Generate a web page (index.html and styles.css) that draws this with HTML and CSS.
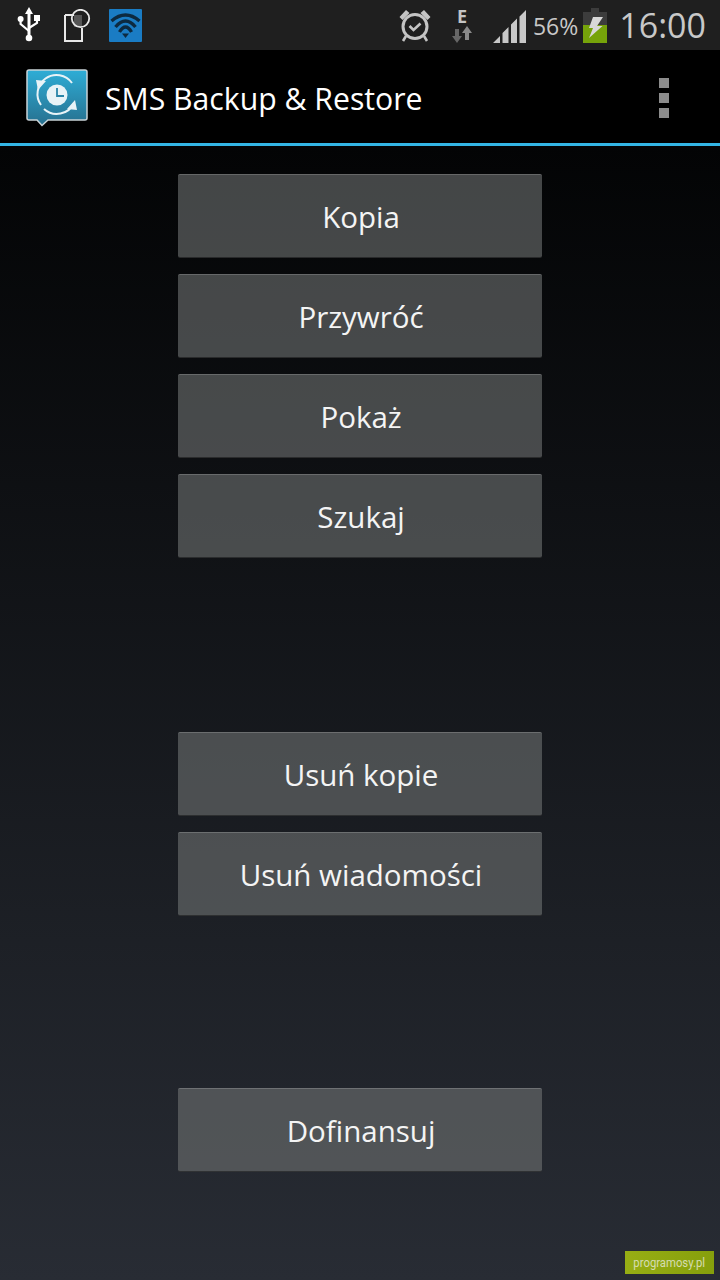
FILE: index.html
```html
<!DOCTYPE html>
<html lang="pl">

<head>
    <meta charset="UTF-8" />
    <meta name="viewport" content="width=device-width, initial-scale=1.0" />
    <title>SMS Backup &amp; Restore</title>
    <link rel="stylesheet" href="styles.css">
</head>

<body>
    <div class="status-bar">
        <div class="status-left">
            <!-- usb -->
            <svg class="icon-usb" width="24" height="36" viewBox="0 0 24 36">
                <g fill="#fff">
                    <path d="M12 0 L16 7 H13.500 V32 H10.500 V7 H8 Z" />
                    <circle cx="12" cy="31" r="3.300" />
                    <circle cx="3.600" cy="12" r="3" />
                    <rect x="17" y="8" width="6" height="6" />
                </g>
                <path d="M3.600 12 V17 L12 24 M20 13 V16 L12 21" fill="none" stroke="#fff" stroke-width="2.200" />
            </svg>
            <!-- sim -->
            <svg class="icon-sim" width="27" height="33" viewBox="0 0 27 33">
                <path d="M1 6 H10 M1 6 V32 H18 V19" fill="none" stroke="#e8e8e8" stroke-width="2" />
                <rect x="10" y="6" width="8" height="12" fill="#555" />
                <circle cx="16.500" cy="9.500" r="8.700" fill="none" stroke="#e8e8e8" stroke-width="1.800" />
            </svg>
            <!-- wifi -->
            <svg class="icon-wifi" width="33" height="33" viewBox="0 0 33 33">
                <rect width="33" height="33" rx="1" fill="#1a7cc4" />
                <g fill="none" stroke="#0d2a40" stroke-width="3.400">
                    <path d="M2.500 12 Q16.500 0 30.500 12" />
                    <path d="M6.500 18 Q16.500 6 26.500 18" />
                    <path d="M10.500 23 Q16.500 13 22.500 23" />
                </g>
                <path d="M13 24.500 H20 L16.500 29 Z" fill="#0d2a40" />
            </svg>
        </div>
        <div class="status-right">
            <!-- alarm -->
            <svg class="icon-alarm" width="34" height="34" viewBox="0 0 34 34">
                <circle cx="17" cy="18.500" r="12" fill="none" stroke="#c4c4c4" stroke-width="3" />
                <path d="M11.500 18 L15.500 22 L22.500 15.500" fill="none" stroke="#c4c4c4" stroke-width="2.600" />
                <path d="M1.500 9 L8 2 L11.500 5 L4.500 12 Z M32.500 9 L26 2 L22.500 5 L29.500 12 Z" fill="#c4c4c4" />
                <path d="M8 28 L5 33 M26 28 L29 33" stroke="#c4c4c4" stroke-width="2.600" />
            </svg>
            <div class="net-type">
                <span class="net-letter">E</span>
                <svg width="20" height="17" viewBox="0 0 20 17">
                    <path d="M5 17 L0 10 H3 V3 H7 V10 H10 Z" fill="#666" />
                    <path d="M15 0 L20 7 H17 V14 H13 V7 H10 Z" fill="#8a8a8a" />
                </svg>
            </div>
            <svg class="icon-signal" width="33" height="33" viewBox="0 0 33 33">
                <path d="M0 33 L7 26 V33 Z M9.500 33 V23 L15.500 17 V33 Z M18 33 V14.500 L24 8.500 V33 Z M26.500 33 V6.500 L33 0 V33 Z" fill="#c8c8c8" />
            </svg>
            <span class="battery-pct">56%</span>
            <svg class="icon-battery" width="24" height="35" viewBox="0 0 24 35">
                <rect x="8" y="0" width="8" height="4" fill="#3c3c3c" />
                <rect x="0" y="4" width="24" height="13" fill="#3c3c3c" />
                <rect x="0" y="17" width="24" height="18" fill="#76a30a" />
                <path d="M10 9 H20 L14 18 H19.500 L6 30 L10 20 H6 Z" fill="#d8d8d8" />
            </svg>
            <span class="clock">16:00</span>
        </div>
    </div>

    <div class="action-bar">
        <svg class="app-icon" width="62" height="58" viewBox="0 0 62 58">
            <defs>
                <linearGradient id="appGrad" x1="0" y1="0" x2="0" y2="1">
                    <stop offset="0" stop-color="#2eadd6" />
                    <stop offset="1" stop-color="#27708f" />
                </linearGradient>
            </defs>
            <path d="M3 1 H59 Q61 1 61 3 V49 Q61 51 59 51 H22 L16 56.500 L11 51 H3 Q1 51 1 49 V3 Q1 1 3 1 Z" fill="url(#appGrad)" stroke="#c9d3d8" stroke-width="1.500" />
            <g fill="none" stroke="#e8f3f7" stroke-width="2">
                <path d="M15 36 A19 19 0 0 1 46 14" />
                <path d="M48 34 A19 19 0 0 1 18 40" />
            </g>
            <circle cx="31" cy="26" r="10.500" fill="#e8f3f7" />
            <path d="M31 19 V27 H38" fill="none" stroke="#2a85a8" stroke-width="1.800" />
            <path d="M10 11 L20 12 L12 21 Z M51 41 L41 40 L49 31 Z" fill="#e8f3f7" />
        </svg>
        <span class="app-title">SMS Backup &amp; Restore</span>
        <div class="overflow-menu">
            <span class="dot"></span>
            <span class="dot"></span>
            <span class="dot"></span>
        </div>
    </div>

    <div class="content">
        <div class="btn-group">
            <button class="btn">Kopia</button>
            <button class="btn">Przywróć</button>
            <button class="btn">Pokaż</button>
            <button class="btn">Szukaj</button>
        </div>
        <div class="btn-group group-delete">
            <button class="btn">Usuń kopie</button>
            <button class="btn">Usuń wiadomości</button>
        </div>
        <div class="btn-group group-donate">
            <button class="btn">Dofinansuj</button>
        </div>
    </div>

    <div class="watermark"><span>programosy.pl</span></div>
</body>

</html>
```

FILE: styles.css
```css
html,
body {
    margin: 0;
    padding: 0;
}

body {
    width: 720px;
    height: 1280px;
    position: relative;
    overflow: hidden;
    background-color: #000;
    font-family: "Open Sans", "Noto Sans", sans-serif;
}

.status-bar {
    height: 50px;
    background-color: #1f1f1f;
    display: flex;
    justify-content: space-between;
    align-items: center;
    box-sizing: border-box;
    padding: 0 14px 0 17px;
}

.status-left,
.status-right {
    display: flex;
    align-items: center;
}

.icon-usb {
    margin-right: 23px;
}

.icon-sim {
    margin-right: 18px;
}

.icon-alarm {
    margin-right: 18px;
}

.net-type {
    width: 24px;
    display: flex;
    flex-direction: column;
    align-items: center;
    margin-right: 19px;
}

.net-letter {
    color: #c4c4c4;
    font-size: 18px;
    font-weight: 700;
    line-height: 16px;
    margin-bottom: 2px;
}

.icon-signal {
    margin: 3px 7px 0 0;
}

.battery-pct {
    color: #c8c8c8;
    font-size: 23px;
    margin: 2px 5px 0 0;
}

.icon-battery {
    margin: 1px 12px 0 0;
}

.clock {
    color: #c8c8c8;
    font-size: 34px;
    line-height: 50px;
}

.action-bar {
    height: 93px;
    background-color: #000;
    display: flex;
    align-items: center;
    box-sizing: border-box;
    padding: 3px 51px 0 26px;
}

.app-icon {
    margin-right: 17px;
}

.app-title {
    color: #fff;
    font-size: 30.2px;
    flex: 1;
}

.overflow-menu {
    display: flex;
    flex-direction: column;
    gap: 5px;
}

.dot {
    width: 10px;
    height: 10px;
    background-color: #8c8c8c;
}

.content {
    height: 1137px;
    box-sizing: border-box;
    border-top: 3px solid #33b5e5;
    padding-top: 28px;
    background: linear-gradient(#030405, #282c34);
    display: flex;
    flex-direction: column;
    align-items: center;
}

.btn-group {
    display: flex;
    flex-direction: column;
    gap: 16px;
}

.group-delete {
    margin-top: 174px;
}

.group-donate {
    margin-top: 172px;
}

.btn {
    width: 364px;
    height: 84px;
    padding: 0 0 0 2px;
    border: 0;
    border-top: 1px solid rgba(255, 255, 255, 0.18);
    border-bottom: 1px solid rgba(0, 0, 0, 0.4);
    border-radius: 2px;
    background-color: rgba(110, 112, 112, 0.61);
    color: #f4f4f4;
    font-family: inherit;
    font-size: 29.5px;
}

.watermark {
    position: absolute;
    right: 6px;
    bottom: 6px;
    width: 89px;
    height: 23px;
    background: linear-gradient(90deg, #97ae14, #869f0c);
    color: #d5dcb0;
    font-family: Roboto, sans-serif;
    font-size: 13px;
    line-height: 23px;
    text-align: center;
}

.watermark span {
    display: inline-block;
    transform: scaleX(0.87);
}
```
